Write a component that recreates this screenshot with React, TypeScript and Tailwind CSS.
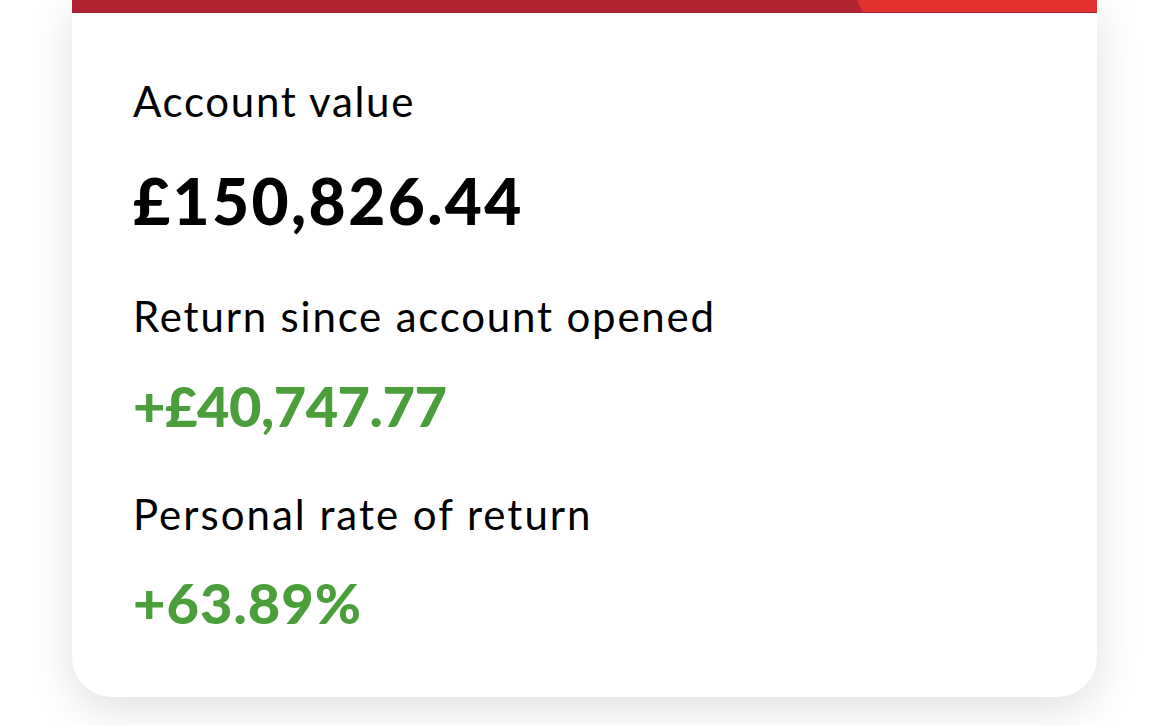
import React from "react";

const rows = [
  { label: "Account value", value: "£150,826.44", tone: "black" },
  { label: "Return since account opened", value: "+£40,747.77", tone: "green" },
  { label: "Personal rate of return", value: "+63.89%", tone: "green" },
];

export default function App() {
  return (
    <div className="min-h-screen bg-white px-[72px] font-['Lato','Liberation_Sans',sans-serif]">
      <div className="h-[697px] w-full overflow-hidden rounded-b-[40px] bg-white shadow-[0_12px_44px_rgba(0,0,0,0.13)]">
        {/* brand bar */}
        <div className="flex h-[13px] justify-end bg-[#b22433] border-b border-black/10">
          <div className="h-full w-[240px] bg-[#e3322f] [clip-path:polygon(0_0,100%_0,100%_100%,6px_100%)]" />
        </div>

        <div className="pl-[61px] pt-[67px]">
          {/* account value */}
          <p className="text-[42px] leading-none tracking-[1.7px] text-black">{rows[0].label}</p>
          <p className="mt-[47px] text-[64px] font-black leading-none tracking-[2.4px] text-black">{rows[0].value}</p>

          {/* returns */}
          <p className="mt-[62px] text-[42px] leading-none tracking-[1.8px] text-black">{rows[1].label}</p>
          <p className="mt-[41px] text-[56px] font-black leading-none tracking-[-0.5px] text-[#4a9f3b]">{rows[1].value}</p>

          <p className="mt-[59px] text-[42px] leading-none tracking-[2px] text-black">{rows[2].label}</p>
          <p className="mt-[40px] text-[56px] font-black leading-none tracking-[1px] text-[#4a9f3b]">{rows[2].value}</p>
        </div>
      </div>
    </div>
  );
}
